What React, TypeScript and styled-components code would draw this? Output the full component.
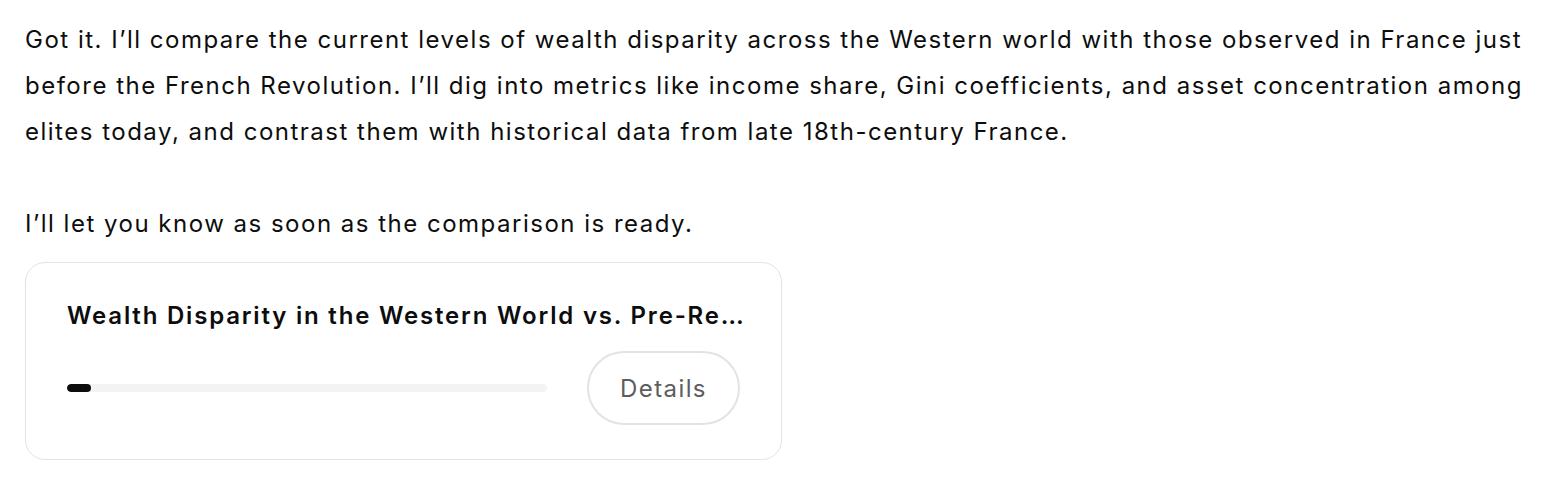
import React from 'react'
import styled, { createGlobalStyle } from 'styled-components'

const GlobalStyle = createGlobalStyle`
  html, body {
    margin: 0;
    padding: 0;
    background: #ffffff;
  }
  body {
    font-family: Inter, 'Noto Sans', 'Liberation Sans', sans-serif;
    color: #0d0d0d;
    -webkit-font-smoothing: antialiased;
  }
`

const Message = styled.div`
  padding: 17px 20px 0 25px;
  font-size: 24px;
  line-height: 46px;
  letter-spacing: 1.5px;
`

const Paragraph = styled.p`
  margin: 0 0 46px;
  white-space: nowrap;

  &:last-of-type {
    margin-bottom: 15px;
  }
`

const Card = styled.div`
  width: 757px;
  box-sizing: border-box;
  border: 1px solid #e3e3e3;
  border-radius: 20px;
  padding: 41px 41px 34px;
  display: flex;
  flex-direction: column;
  gap: 23px;
`

const Title = styled.div`
  font-size: 24px;
  line-height: 24px;
  font-weight: 600;
  letter-spacing: 1.8px;
  white-space: nowrap;
`

const Row = styled.div`
  display: flex;
  align-items: center;
  gap: 40px;
`

const Track = styled.div`
  flex: 1;
  height: 8px;
  border-radius: 4px;
  background: #f3f3f3;
  overflow: hidden;
`

const Fill = styled.div<{ $pct: number }>`
  height: 100%;
  width: ${(p) => p.$pct}%;
  min-width: 24px;
  border-radius: 4px;
  background: #0d0d0d;
`

const DetailsButton = styled.button`
  width: 153px;
  height: 74px;
  box-sizing: border-box;
  border: 2px solid #e3e3e3;
  border-radius: 37px;
  background: #ffffff;
  color: #5d5d5d;
  font-family: inherit;
  font-size: 24px;
  letter-spacing: 1.4px;
  cursor: pointer;
`

export default function App() {
  return (
    <>
      <GlobalStyle />
      <Message>
        <Paragraph>
          Got it. I’ll compare the current levels of wealth disparity across the Western world with those observed in France just
          <br />
          before the French Revolution. I’ll dig into metrics like income share, Gini coefficients, and asset concentration among
          <br />
          elites today, and contrast them with historical data from late 18th-century France.
        </Paragraph>
        <Paragraph>I’ll let you know as soon as the comparison is ready.</Paragraph>
        <Card>
          <Title>Wealth Disparity in the Western World vs. Pre-Re…</Title>
          <Row>
            <Track>
              <Fill $pct={5} />
            </Track>
            <DetailsButton>Details</DetailsButton>
          </Row>
        </Card>
      </Message>
    </>
  )
}
